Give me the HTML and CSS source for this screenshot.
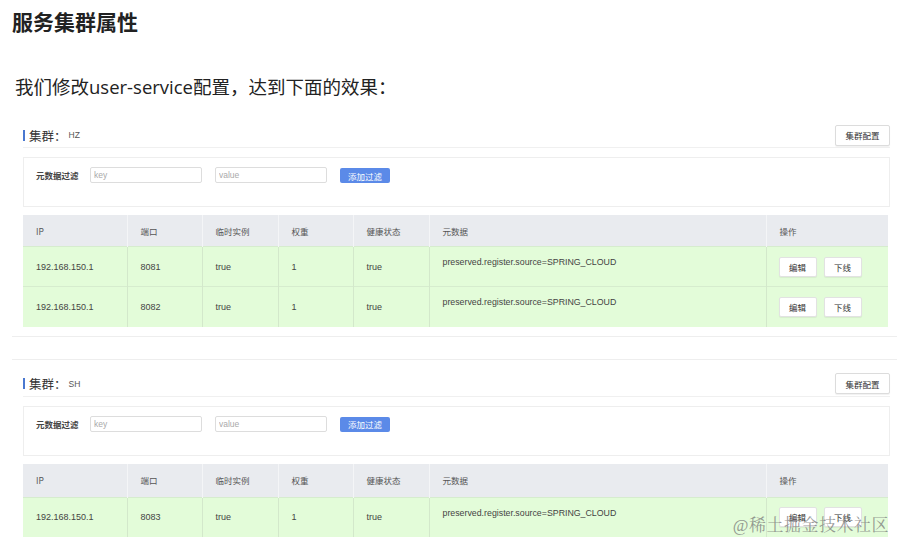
FILE: index.html
```html
<!DOCTYPE html>
<html lang="zh-CN">
<head>
<meta charset="utf-8">
<link rel="stylesheet" href="styles.css">
</head>
<body>
<div class="page">
  <h1 class="title">服务集群属性</h1>
  <p class="lead">我们修改user-service配置，达到下面的效果：</p>

  <section class="cluster">
    <div class="cluster-head">
      <div class="cluster-name"><span class="bar"></span><span class="cn">集群：</span><span class="code">HZ</span></div>
      <button class="btn">集群配置</button>
    </div>
    <div class="filter">
      <span class="flabel">元数据过滤</span>
      <input class="finput" placeholder="key">
      <input class="finput" placeholder="value">
      <button class="btn-primary">添加过滤</button>
    </div>
    <table class="grid">
      <colgroup><col class="c1"><col class="c2"><col class="c3"><col class="c4"><col class="c5"><col class="c6"><col class="c7"></colgroup>
      <thead><tr><th>IP</th><th>端口</th><th>临时实例</th><th>权重</th><th>健康状态</th><th>元数据</th><th>操作</th></tr></thead>
      <tbody>
        <tr><td>192.168.150.1</td><td>8081</td><td>true</td><td>1</td><td>true</td><td class="meta">preserved.register.source=SPRING_CLOUD</td><td class="ops"><button class="btn sm">编辑</button><button class="btn sm">下线</button></td></tr>
        <tr><td>192.168.150.1</td><td>8082</td><td>true</td><td>1</td><td>true</td><td class="meta">preserved.register.source=SPRING_CLOUD</td><td class="ops"><button class="btn sm">编辑</button><button class="btn sm">下线</button></td></tr>
      </tbody>
    </table>
  </section>

  <div class="divider"></div>

  <section class="cluster second">
    <div class="cluster-head">
      <div class="cluster-name"><span class="bar"></span><span class="cn">集群：</span><span class="code">SH</span></div>
      <button class="btn">集群配置</button>
    </div>
    <div class="filter">
      <span class="flabel">元数据过滤</span>
      <input class="finput" placeholder="key">
      <input class="finput" placeholder="value">
      <button class="btn-primary">添加过滤</button>
    </div>
    <table class="grid tall">
      <colgroup><col class="c1"><col class="c2"><col class="c3"><col class="c4"><col class="c5"><col class="c6"><col class="c7"></colgroup>
      <thead><tr><th>IP</th><th>端口</th><th>临时实例</th><th>权重</th><th>健康状态</th><th>元数据</th><th>操作</th></tr></thead>
      <tbody>
        <tr><td>192.168.150.1</td><td>8083</td><td>true</td><td>1</td><td>true</td><td class="meta">preserved.register.source=SPRING_CLOUD</td><td class="ops"><button class="btn sm">编辑</button><button class="btn sm">下线</button></td></tr>
      </tbody>
    </table>
  </section>

  <div class="watermark">@稀土掘金技术社区</div>
</div>
</body>
</html>
```

FILE: styles.css
```css
html, body {
  margin: 0;
  padding: 0;
  background: #ffffff;
}
.page {
  position: relative;
  width: 897px;
  height: 542px;
  overflow: hidden;
  font-family: "Liberation Sans", "Noto Sans CJK SC", sans-serif;
  color: #333;
}
.title {
  margin: 0;
  padding: 8px 0 0 12px;
  font-family: "Noto Sans CJK SC", sans-serif;
  font-size: 21px;
  line-height: 26px;
  font-weight: 700;
  color: #222;
}
.lead {
  margin: 0;
  padding: 40px 0 0 15px;
  font-family: "Open Sans", "Noto Sans CJK SC", sans-serif;
  font-size: 18.5px;
  line-height: 26px;
  color: #222;
}
.cluster {
  padding: 24px 7px 0 23px;
}
.cluster.second {
  padding-top: 13px;
}
.cluster-head {
  display: flex;
  justify-content: space-between;
  align-items: center;
  height: 22px;
  padding-bottom: 1px;
  border-bottom: 1px solid #f0f0f0;
}
.cluster-name {
  display: flex;
  align-items: center;
}
.bar {
  display: inline-block;
  width: 2px;
  height: 11px;
  background: #4a78d0;
  margin-right: 4px;
}
.cn {
  font-family: "Noto Sans CJK SC", sans-serif;
  font-size: 12.5px;
  color: #333;
}
.code {
  font-size: 8.5px;
  color: #555;
  margin-left: 2px;
}
.btn {
  font-family: "Noto Sans CJK SC", sans-serif;
  font-size: 8.5px;
  color: #333;
  background: #fff;
  border: 1px solid #dcdcdc;
  border-radius: 2px;
  height: 21px;
  width: 55px;
  padding: 0;
  box-shadow: 0 1px 1px rgba(0,0,0,0.06);
}
.btn.sm {
  width: 38px;
  height: 20px;
  border-color: #e2e2e2;
}
.filter {
  margin-top: 9px;
  height: 50px;
  border: 1px solid #eeeeee;
  display: flex;
  align-items: flex-start;
  padding: 9px 0 0 12px;
  box-sizing: border-box;
}
.flabel {
  font-family: "Noto Sans CJK SC", sans-serif;
  font-size: 8.5px;
  font-weight: 700;
  color: #444;
  width: 54px;
  line-height: 16px;
}
.finput {
  width: 112px;
  height: 16px;
  box-sizing: border-box;
  border: 1px solid #dddddd;
  border-radius: 2px;
  margin: 0 13px 0 0;
  padding: 0 3px;
  font-family: "Liberation Sans", sans-serif;
  font-size: 8.5px;
  color: #333;
  outline: none;
}
.finput::placeholder {
  color: #aaa;
}
.btn-primary {
  width: 50px;
  height: 15px;
  padding: 0;
  border: none;
  border-radius: 2px;
  background: #5b8ae8;
  color: #fff;
  font-family: "Noto Sans CJK SC", sans-serif;
  font-size: 8.5px;
  margin-top: 1px;
}
.grid {
  margin-top: 8px;
  width: 865px;
  border-collapse: collapse;
  table-layout: fixed;
  font-size: 9px;
}
.c1 { width: 104px; }
.c2 { width: 75px; }
.c3 { width: 76px; }
.c4 { width: 75px; }
.c5 { width: 76px; }
.c6 { width: 337px; }
.c7 { width: 122px; }
.grid th {
  background: #e9ebef;
  height: 31px;
  text-align: left;
  font-weight: 400;
  font-family: "Noto Sans CJK SC", sans-serif;
  font-size: 8.5px;
  color: #555;
  padding: 0 0 0 13px;
  border-left: 1px solid #f4f5f7;
}
.grid th:first-child, .grid td:first-child {
  border-left: none;
}
.grid td {
  background: #e3fcd9;
  height: 40px;
  padding: 0 0 0 13px;
  color: #444;
  border-left: 1px solid #d3e8cb;
  border-top: 1px solid #d6ecce;
  box-sizing: border-box;
}
.grid td.meta {
  vertical-align: top;
  padding-top: 10px;
  font-size: 8.8px;
}
.grid td.ops {
  padding-left: 12px;
}
.grid td.ops .btn + .btn {
  margin-left: 7px;
}
.grid.tall th {
  height: 33px;
}
.divider {
  margin-top: 9px;
  margin-left: 12px;
  height: 22px;
  border-top: 1px solid #eeeeee;
  border-bottom: 1px solid #eeeeee;
}
.watermark {
  position: absolute;
  right: 8px;
  bottom: 6px;
  font-family: "Liberation Serif", "Noto Serif CJK SC", "Noto Sans CJK SC", serif;
  font-size: 17px;
  color: rgba(120, 120, 120, 0.75);
  letter-spacing: 0.5px;
}
```
